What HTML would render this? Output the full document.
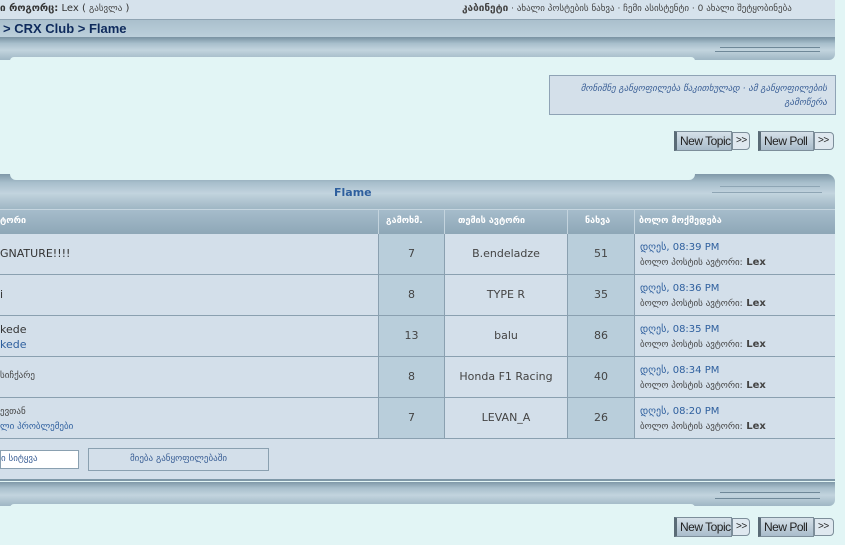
<!DOCTYPE html>
<html><head><meta charset="utf-8"><style>
*{margin:0;padding:0;box-sizing:border-box}
body{width:845px;height:545px;background:#e2f5f5;font-family:"DejaVu Sans","Liberation Sans",sans-serif;font-size:10px;color:#333;position:relative;overflow:hidden}
.a{position:absolute}
.strip{background:linear-gradient(#7f98a8,#a8bfcc 25%,#c2d4de 55%,#9fb6c4);}
.lines{position:absolute;height:1px;background:#6f8898}
.btn{position:absolute;height:20px;font-family:"Liberation Sans",sans-serif;font-size:12px;color:#222;white-space:nowrap;letter-spacing:-0.5px}
.btn .m{position:absolute;top:0;height:20px;border:1px solid #7d8e9a;border-left:3px solid #5a6b76;background:linear-gradient(#d5e0e8,#a9bccb);padding:2px 0 0 3px}
.btn .r{position:absolute;top:1px;height:18px;border:1px solid #7d8e9a;border-radius:0 4px 4px 0;background:#dfe8ef;font-size:10px;padding:2px 0 0 3px}
.row{position:absolute;left:0;width:835px;height:41px;background:#d3dfea;border-bottom:1px solid #8aa0b0}
.c{position:absolute;top:0;height:40px;text-align:center;line-height:40px;font-size:11px;color:#444}
.dk{background:#b9cedb}
.vl{border-left:1px solid #8aa0b0}
.ln{color:#2e5f9e}
.geo{font-size:9px;color:#444}
</style></head><body>
<div class="a" style="left:0;top:0;width:835px;height:20px;background:#d6e2ec;border-bottom:1px solid #8fa3b2"></div>
<div class="a" style="left:0;top:3px;font-size:10px"><b>ი როგორც:</b> Lex ( <span class="geo">გასვლა</span> )</div>
<div class="a geo" style="left:462px;top:3px;font-size:9px"><b style="font-size:10px">კაბინეტი</b> · ახალი პოსტების ნახვა · ჩემი ასისტენტი · 0 ახალი შეტყობინება</div>
<div class="a" style="left:0;top:20px;width:835px;height:18px;background:linear-gradient(#aac0cd,#bccfdb);border-bottom:1px solid #7d95a5"></div>
<div class="a" style="left:3px;top:21px;font-family:'Liberation Sans',sans-serif;font-size:13px;font-weight:bold;color:#0e2a5c">&gt; CRX Club &gt; Flame</div>
<div class="a strip" style="left:0;top:38px;width:835px;height:22px;border-radius:0 0 6px 0"></div>
<div class="a" style="left:10px;top:57px;width:685px;height:4px;background:#e2f5f5;border-radius:4px 4px 0 0"></div>
<div class="lines" style="left:720px;top:47px;width:100px"></div>
<div class="lines" style="left:715px;top:51px;width:105px"></div>
<div class="a" style="left:549px;top:75px;width:287px;height:40px;background:#d4e0ea;border:1px solid #8fa3b5;text-align:right;padding:6px 8px 0 0;font-size:9px;font-style:italic;color:#3a5f96;line-height:14px">მონიშნე განყოფილება წაკითხულად · ამ განყოფილების გამოწერა</div>
<div class="btn" style="left:674px;top:131px"><div class="m" style="left:0;width:58px">New Topic</div><div class="r" style="left:58px;width:18px">&gt;&gt;</div></div>
<div class="btn" style="left:758px;top:131px"><div class="m" style="left:0;width:56px">New Poll</div><div class="r" style="left:56px;width:20px">&gt;&gt;</div></div>
<div class="a strip" style="left:0;top:174px;width:835px;height:35px;border-radius:0 8px 0 0"></div>
<div class="a" style="left:10px;top:172px;width:685px;height:8px;background:#e2f5f5;border-radius:0 0 6px 6px"></div>
<div class="lines" style="left:720px;top:186px;width:100px;background:#8ea5b4"></div>
<div class="lines" style="left:712px;top:192px;width:110px;background:#8ea5b4"></div>
<div class="a" style="left:334px;top:186px;font-weight:bold;font-size:11px;color:#2e5f9e">Flame</div>
<div class="a" style="left:0;top:209px;width:835px;height:25px;background:linear-gradient(#a6bccb,#8ea7b7);border-top:1px solid #c5d5df"></div>
<div class="a" style="top:209px;left:378px;width:1px;height:25px;background:#c4d4de"></div>
<div class="a" style="top:209px;left:444px;width:1px;height:25px;background:#c4d4de"></div>
<div class="a" style="top:209px;left:567px;width:1px;height:25px;background:#c4d4de"></div>
<div class="a" style="top:209px;left:634px;width:1px;height:25px;background:#c4d4de"></div>
<div class="a" style="top:216px;left:0;color:#fff;font-weight:bold;font-size:9px">ტორი</div>
<div class="a" style="top:216px;left:386px;color:#fff;font-weight:bold;font-size:9px">გამოხმ.</div>
<div class="a" style="top:216px;left:458px;color:#fff;font-weight:bold;font-size:9px">თემის ავტორი</div>
<div class="a" style="top:216px;left:585px;color:#fff;font-weight:bold;font-size:9px">ნახვა</div>
<div class="a" style="top:216px;left:639px;color:#fff;font-weight:bold;font-size:9px">ბოლო მოქმედება</div>
<div class="row" style="top:234px"><div class="a" style="left:0;top:13px;font-size:11px">GNATURE!!!!</div><div class="c dk vl" style="left:378px;width:66px">7</div><div class="c vl" style="left:444px;width:123px">B.endeladze</div><div class="c dk vl" style="left:567px;width:67px">51</div><div class="c vl" style="left:634px;width:201px;text-align:left;line-height:14px;padding:6px 0 0 5px"><span class="ln" style="font-size:10px">დღეს, 08:39 PM</span><br><span class="geo">ბოლო პოსტის ავტორი:</span> <b style="font-size:10px">Lex</b></div></div>
<div class="row" style="top:275px"><div class="a" style="left:0;top:13px;font-size:11px">i</div><div class="c dk vl" style="left:378px;width:66px">8</div><div class="c vl" style="left:444px;width:123px">TYPE R</div><div class="c dk vl" style="left:567px;width:67px">35</div><div class="c vl" style="left:634px;width:201px;text-align:left;line-height:14px;padding:6px 0 0 5px"><span class="ln" style="font-size:10px">დღეს, 08:36 PM</span><br><span class="geo">ბოლო პოსტის ავტორი:</span> <b style="font-size:10px">Lex</b></div></div>
<div class="row" style="top:316px"><div class="a" style="left:0;top:6px;font-size:11px;line-height:15px">kede<br><span class="ln">kede</span></div><div class="c dk vl" style="left:378px;width:66px">13</div><div class="c vl" style="left:444px;width:123px">balu</div><div class="c dk vl" style="left:567px;width:67px">86</div><div class="c vl" style="left:634px;width:201px;text-align:left;line-height:14px;padding:6px 0 0 5px"><span class="ln" style="font-size:10px">დღეს, 08:35 PM</span><br><span class="geo">ბოლო პოსტის ავტორი:</span> <b style="font-size:10px">Lex</b></div></div>
<div class="row" style="top:357px"><div class="a geo" style="left:0;top:14px">სიჩქარე</div><div class="c dk vl" style="left:378px;width:66px">8</div><div class="c vl" style="left:444px;width:123px">Honda F1 Racing</div><div class="c dk vl" style="left:567px;width:67px">40</div><div class="c vl" style="left:634px;width:201px;text-align:left;line-height:14px;padding:6px 0 0 5px"><span class="ln" style="font-size:10px">დღეს, 08:34 PM</span><br><span class="geo">ბოლო პოსტის ავტორი:</span> <b style="font-size:10px">Lex</b></div></div>
<div class="row" style="top:398px"><div class="a geo" style="left:0;top:7px;line-height:15px">ევთან<br><span class="ln">ლი პრობლემები</span></div><div class="c dk vl" style="left:378px;width:66px">7</div><div class="c vl" style="left:444px;width:123px">LEVAN_A</div><div class="c dk vl" style="left:567px;width:67px">26</div><div class="c vl" style="left:634px;width:201px;text-align:left;line-height:14px;padding:6px 0 0 5px"><span class="ln" style="font-size:10px">დღეს, 08:20 PM</span><br><span class="geo">ბოლო პოსტის ავტორი:</span> <b style="font-size:10px">Lex</b></div></div>
<div class="a" style="left:0;top:439px;width:835px;height:42px;background:#d3dfea;border-bottom:2px solid #7f98a8"></div>
<div class="a geo" style="left:0;top:450px;width:79px;height:19px;background:#fff;border:1px solid #8aa0b0;padding:3px 0 0 0;color:#3a5f96">ი სიტყვა</div>
<div class="a geo" style="left:88px;top:448px;width:181px;height:23px;background:#d3dfea;border:1px solid #8aa0b0;text-align:center;padding-top:5px;color:#3a5f96">მიება განყოფილებაში</div>
<div class="a strip" style="left:0;top:482px;width:835px;height:24px;border-radius:0 0 6px 0"></div>
<div class="a" style="left:10px;top:504px;width:685px;height:4px;background:#e2f5f5;border-radius:4px 4px 0 0"></div>
<div class="lines" style="left:720px;top:492px;width:100px"></div>
<div class="lines" style="left:715px;top:498px;width:105px"></div>
<div class="btn" style="left:674px;top:517px"><div class="m" style="left:0;width:58px">New Topic</div><div class="r" style="left:58px;width:18px">&gt;&gt;</div></div>
<div class="btn" style="left:758px;top:517px"><div class="m" style="left:0;width:56px">New Poll</div><div class="r" style="left:56px;width:20px">&gt;&gt;</div></div>
</body></html>
